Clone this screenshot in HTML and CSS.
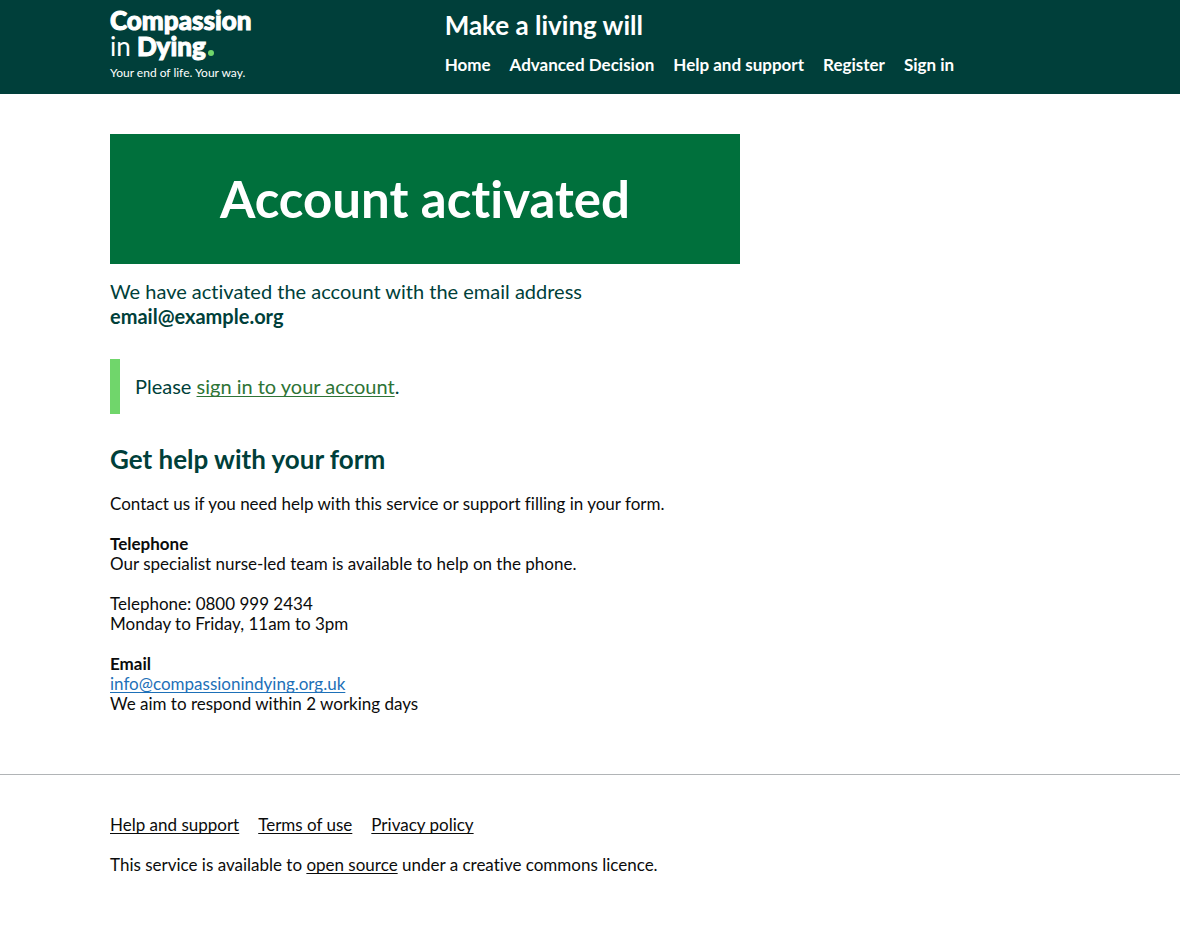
FILE: index.html
```html
<!DOCTYPE html>
<html lang="en">
<head>
<meta charset="utf-8">
<meta name="viewport" content="width=device-width, initial-scale=1">
<title>Account activated - Make a living will</title>
<link rel="stylesheet" href="styles.css">
</head>
<body>
<header class="header">
  <div class="container header-grid">
    <a class="logo" href="#">
      <span class="logo-name">Compassion</span>
      <span class="logo-name"><span class="logo-thin">in</span> Dying<span class="logo-dot"></span></span>
      <span class="logo-tagline">Your end of life. Your way.</span>
    </a>
    <div class="header-content">
      <a class="service-name" href="#">Make a living will</a>
      <nav aria-label="Main">
        <ul class="nav-list">
          <li><a href="#">Home</a></li>
          <li><a href="#">Advanced Decision</a></li>
          <li><a href="#">Help and support</a></li>
          <li><a href="#">Register</a></li>
          <li><a href="#">Sign in</a></li>
        </ul>
      </nav>
    </div>
  </div>
</header>
<main class="container main">
  <div class="column">
    <div class="panel"><h1 class="panel-title">Account activated</h1></div>
    <p class="lead">We have activated the account with the email address <strong class="address">email@example.org</strong></p>
    <p class="inset">Please <a href="#">sign in to your account</a>.</p>
    <h2 class="heading">Get help with your form</h2>
    <p class="body">Contact us if you need help with this service or support filling in your form.</p>
    <p class="body"><strong>Telephone</strong><br>Our specialist nurse-led team is available to help on the phone.</p>
    <p class="body">Telephone: 0800 999 2434<br>Monday to Friday, 11am to 3pm</p>
    <p class="body"><strong>Email</strong><br><a class="mail" href="mailto:info@compassionindying.org.uk">info@compassionindying.org.uk</a><br>We aim to respond within 2 working days</p>
  </div>
</main>
<footer class="footer">
  <div class="container">
    <ul class="footer-list">
      <li><a href="#">Help and support</a></li>
      <li><a href="#">Terms of use</a></li>
      <li><a href="#">Privacy policy</a></li>
    </ul>
    <p class="licence">This service is available to <a href="#">open source</a> under a creative commons licence.</p>
  </div>
</footer>
</body>
</html>
```
FILE: styles.css
```css
*, *::before, *::after { box-sizing: border-box; }
body {
  margin: 0;
  background: #fff;
  color: #0b0c0c;
  font-family: Lato, "Liberation Sans", sans-serif;
  font-size: 17px;
  line-height: 20px;
  font-variant-ligatures: none;
}
p, h1, h2, ul { margin: 0; padding: 0; }
ul { list-style: none; }
.container { max-width: 960px; margin: 0 auto; }
@media (max-width: 1020px) { .container { margin: 0 30px; } }

.header { background: #003f3a; color: #fff; }
.header a { color: inherit; text-decoration: none; }
.header-grid {
  display: grid;
  grid-template-columns: 1fr 2fr;
  column-gap: 22px;
  padding: 7px 0 11px;
}
.logo { display: flex; flex-direction: column; align-items: flex-start; }
.logo-name {
  font-size: 26px;
  line-height: 26px;
  font-weight: 900;
  white-space: nowrap;
  -webkit-text-stroke: 1px currentColor;
}
.logo-thin { font-weight: 400; -webkit-text-stroke: 0; }
.logo-dot {
  display: inline-block;
  width: 6px;
  height: 6px;
  margin-left: 2px;
  border-radius: 50%;
  background: #70d66b;
}
.logo-tagline { margin-top: 4px; font-size: 12px; line-height: 20px; white-space: nowrap; }
.header-content { display: flex; flex-direction: column; align-items: flex-start; gap: 12px; }
.service-name { font-size: 26px; line-height: 36px; font-weight: 700; }
.nav-list { display: flex; flex-wrap: wrap; gap: 8px 19px; font-weight: 700; }

.main { padding: 40px 0 60px; }
.column { max-width: 630px; }
.panel { padding: 35px; background: #00703c; color: #fff; text-align: center; }
.panel-title { font-size: 51px; line-height: 60px; font-weight: 700; }
.lead, .inset { color: #003f3a; font-size: 20px; line-height: 25px; }
.lead { margin-top: 15px; }
.address { display: block; }
.inset { margin: 30px 0; padding: 15px; border-left: 10px solid #70d66b; }
.inset a { color: #2e7436; }
.heading { margin-bottom: 20px; color: #003f3a; font-size: 26px; line-height: 30px; font-weight: 700; }
.body + .body { margin-top: 20px; }
.mail { color: #1d70b8; }
a { text-decoration-thickness: 1px; text-underline-offset: 2px; text-decoration-skip-ink: none; }

.footer { padding: 40px 0; border-top: 1px solid #b1b4b6; }
.footer a { color: inherit; }
.footer-list { display: flex; flex-wrap: wrap; gap: 8px 19px; margin-bottom: 20px; }
```
